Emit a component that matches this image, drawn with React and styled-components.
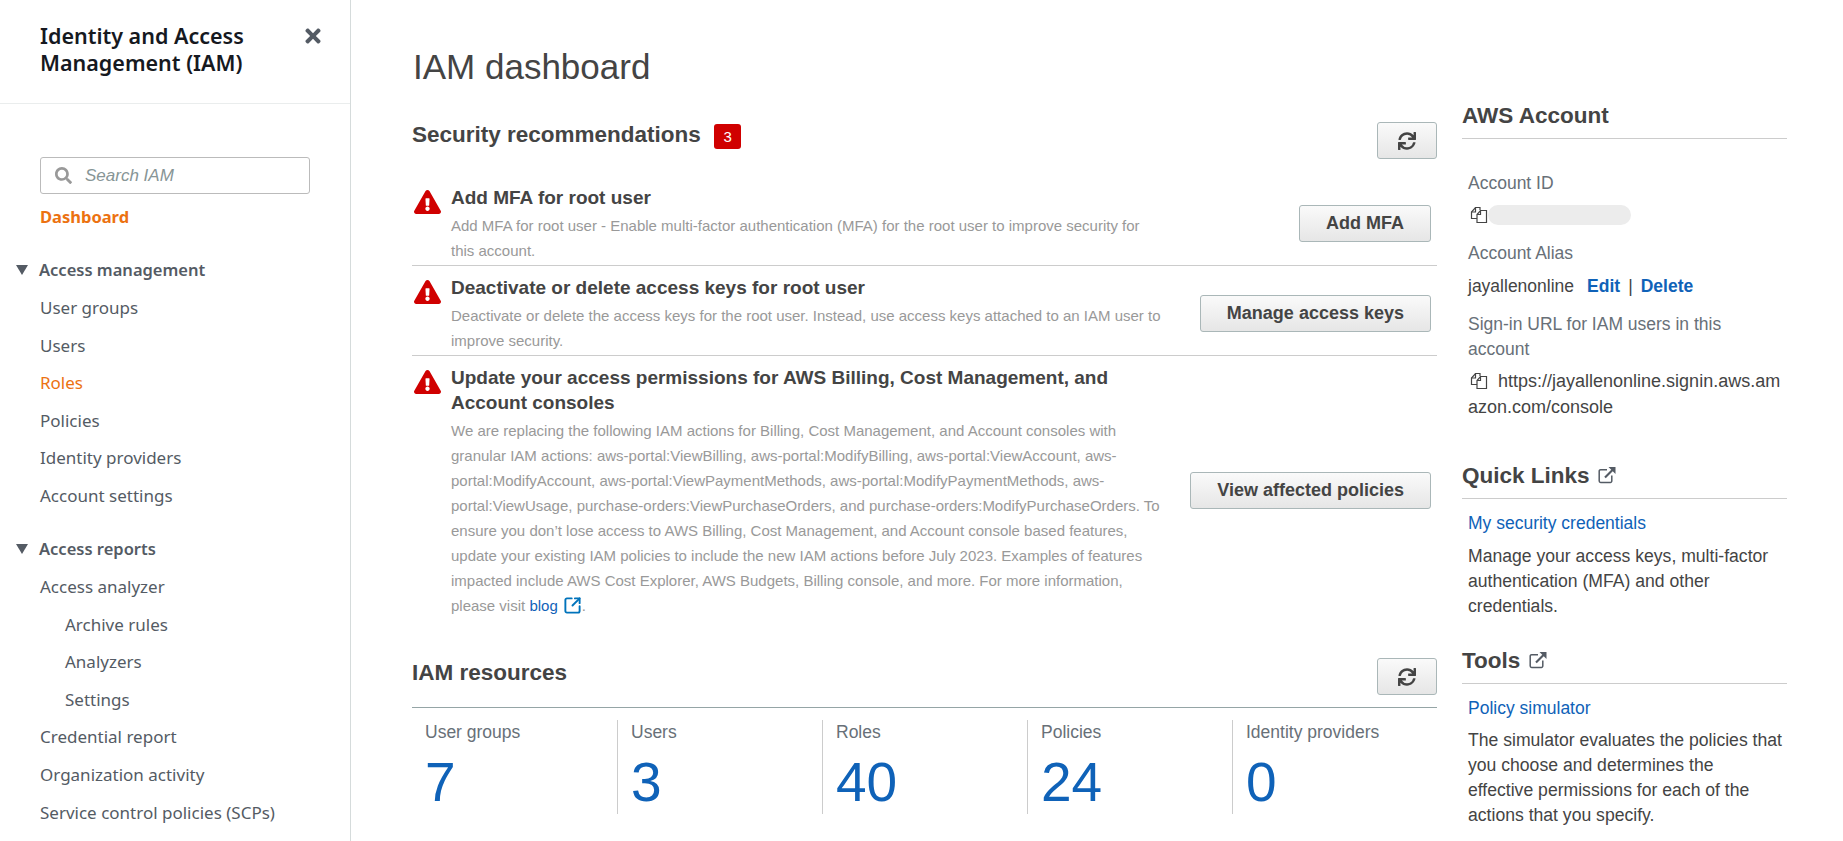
import styled, { createGlobalStyle } from 'styled-components';
import { FaTimes, FaSearch, FaSync, FaExclamationTriangle } from 'react-icons/fa';
import { SquareArrowOutUpRight } from 'lucide-react';

const color = {
  text: '#444',
  muted: '#999',
  label: '#687078',
  link: '#0f62b8',
  orange: '#ec7211',
  red: '#d00000',
  line: '#ccc',
};

const GlobalStyle = createGlobalStyle`
  html, body { margin: 0; padding: 0; height: 100%; background: #fff; }
  body { font-family: "Liberation Sans", Arial, sans-serif; color: ${color.text}; }
`;

const recommendations = [
  {
    title: 'Add MFA for root user',
    text: 'Add MFA for root user - Enable multi-factor authentication (MFA) for the root user to improve security for this account.',
    action: 'Add MFA',
  },
  {
    title: 'Deactivate or delete access keys for root user',
    text: 'Deactivate or delete the access keys for the root user. Instead, use access keys attached to an IAM user to improve security.',
    action: 'Manage access keys',
  },
  {
    title: 'Update your access permissions for AWS Billing, Cost Management, and Account consoles',
    text: 'We are replacing the following IAM actions for Billing, Cost Management, and Account consoles with granular IAM actions: aws-portal:ViewBilling, aws-portal:ModifyBilling, aws-portal:ViewAccount, aws-portal:ModifyAccount, aws-portal:ViewPaymentMethods, aws-portal:ModifyPaymentMethods, aws-portal:ViewUsage, purchase-orders:ViewPurchaseOrders, and purchase-orders:ModifyPurchaseOrders. To ensure you don’t lose access to AWS Billing, Cost Management, and Account console based features, update your existing IAM policies to include the new IAM actions before July 2023. Examples of features impacted include AWS Cost Explorer, AWS Budgets, Billing console, and more. For more information, please visit ',
    action: 'View affected policies',
    blog: true,
  },
];

const resources = [
  ['User groups', 7],
  ['Users', 3],
  ['Roles', 40],
  ['Policies', 24],
  ['Identity providers', 0],
];

function CopyIcon() {
  return (
    <CopySvg viewBox="0 0 18 18" fill="none" stroke="#444" strokeWidth="1.2">
      <path d="M7 12.5H1.5V6L5.5 1.5H10V4" />
      <path d="M5.5 1.5V6H1.5" />
      <path d="M7 16.5V8.5L10.5 4.5H16.5V16.5Z" fill="#fff" />
      <path d="M10.5 4.5V8.5H7" />
    </CopySvg>
  );
}

function ExternalIcon() {
  return (
    <ExternalSvg viewBox="0 0 18 18" fill="none" stroke="#545b64">
      <path d="M9 3.7H2.6A1.4 1.4 0 0 0 1.2 5.1V15A1.4 1.4 0 0 0 2.6 16.4H12.4A1.4 1.4 0 0 0 13.8 15V9.5" strokeWidth="1.5" />
      <path d="M7 11.5L15 3.5" strokeWidth="2.2" />
      <path d="M10.5 1H17.5V8Z" fill="#545b64" stroke="none" />
    </ExternalSvg>
  );
}

function App() {
  return (
    <Page>
      <GlobalStyle />
      <Sidebar>
        <SideHeader>
          <SideTitle>Identity and Access Management (IAM)</SideTitle>
          <CloseIcon />
        </SideHeader>
        <SideBody>
          <SearchBox>
            <FaSearch />
            <span>Search IAM</span>
          </SearchBox>
          <DashLink>Dashboard</DashLink>
          <Group>
            <Caret viewBox="0 0 12 10"><path d="M0 0H12L6 10Z" /></Caret>
            Access management
          </Group>
          <NavItem>User groups</NavItem>
          <NavItem>Users</NavItem>
          <NavItem $active>Roles</NavItem>
          <NavItem>Policies</NavItem>
          <NavItem>Identity providers</NavItem>
          <NavItem>Account settings</NavItem>
          <Group $second>
            <Caret viewBox="0 0 12 10"><path d="M0 0H12L6 10Z" /></Caret>
            Access reports
          </Group>
          <NavItem>Access analyzer</NavItem>
          <NavItem $sub>Archive rules</NavItem>
          <NavItem $sub>Analyzers</NavItem>
          <NavItem $sub>Settings</NavItem>
          <NavItem>Credential report</NavItem>
          <NavItem>Organization activity</NavItem>
          <NavItem>Service control policies (SCPs)</NavItem>
        </SideBody>
      </Sidebar>

      <Main>
        <PageTitle>IAM dashboard</PageTitle>
        <SectionHead>
          <SectionTitle>
            Security recommendations <Badge>3</Badge>
          </SectionTitle>
          <RefreshButton $top="2px"><FaSync /></RefreshButton>
        </SectionHead>
        <Recommendations>
          {recommendations.map((r) => (
            <Rec key={r.title}>
              <WarnIcon />
              <RecBody>
                <RecTitle>{r.title}</RecTitle>
                <RecText>
                  {r.text}
                  {r.blog && (
                    <>
                      <BlogLink>blog</BlogLink>
                      <BlogIcon size={19} strokeWidth={2.4} />.
                    </>
                  )}
                </RecText>
              </RecBody>
              <RecAction>
                <ActionButton>{r.action}</ActionButton>
              </RecAction>
            </Rec>
          ))}
        </Recommendations>

        <ResourcesHead>
          <SectionTitle>IAM resources</SectionTitle>
          <RefreshButton><FaSync /></RefreshButton>
        </ResourcesHead>
        <Stats>
          {resources.map(([label, value]) => (
            <Stat key={label}>
              <StatLabel>{label}</StatLabel>
              <StatValue>{value}</StatValue>
            </Stat>
          ))}
        </Stats>
      </Main>

      <Aside>
        <AsideHead>AWS Account</AsideHead>
        <AccountInfo>
          <InfoLabel>Account ID</InfoLabel>
          <IdRow>
            <CopyIcon />
            <Redacted />
          </IdRow>
          <InfoLabel>Account Alias</InfoLabel>
          <InfoValue>
            jayallenonline
            <StrongLink $first>Edit</StrongLink>
            <Sep>|</Sep>
            <StrongLink>Delete</StrongLink>
          </InfoValue>
          <InfoLabel>Sign-in URL for IAM users in this account</InfoLabel>
          <UrlValue>
            <CopyIcon />
            https://jayallenonline.signin.aws.amazon.com/console
          </UrlValue>
        </AccountInfo>

        <AsideHead $top="41px">
          Quick Links <ExternalIcon />
        </AsideHead>
        <LinkBlock>
          <TextLink>My security credentials</TextLink>
          <LinkText $gap="8px">Manage your access keys, multi-factor authentication (MFA) and other credentials.</LinkText>
        </LinkBlock>

        <AsideHead $top="27px">
          Tools <ExternalIcon />
        </AsideHead>
        <LinkBlock>
          <TextLink>Policy simulator</TextLink>
          <LinkText $gap="7px">The simulator evaluates the policies that you choose and determines the effective permissions for each of the actions that you specify.</LinkText>
        </LinkBlock>
      </Aside>
    </Page>
  );
}
export default App;

const Page = styled.div`
  display: flex;
  height: 100vh;
  overflow: hidden;
`;

const Sidebar = styled.nav`
  flex: 0 0 350px;
  border-right: 1px solid #d5dbdb;
  font-family: "Noto Sans", "Open Sans", sans-serif;
`;

const SideHeader = styled.div`
  display: flex;
  justify-content: space-between;
  height: 104px;
  box-sizing: border-box;
  padding: 22px 26px 0 40px;
  border-bottom: 1px solid #eaeded;
`;

const SideTitle = styled.div`
  width: 245px;
  font-size: 21.5px;
  line-height: 27px;
  font-weight: 600;
  color: #16191f;
`;

const CloseIcon = styled(FaTimes)`
  margin-top: 3px;
  font-size: 22px;
  color: #545b64;
`;

const SideBody = styled.div`
  padding: 53px 0 0 40px;
`;

const SearchBox = styled.div`
  display: flex;
  align-items: center;
  gap: 13px;
  width: 270px;
  height: 37px;
  box-sizing: border-box;
  padding-left: 14px;
  border: 1px solid #bbb;
  border-radius: 3px;
  font-family: "Liberation Sans", sans-serif;
  font-size: 17px;
  font-style: italic;
  color: #879596;
  svg { font-size: 17px; color: #999; }
`;

const DashLink = styled.div`
  margin-top: 7px;
  font-size: 16.5px;
  line-height: 32px;
  font-weight: 700;
  color: ${color.orange};
`;

const Group = styled.div`
  display: flex;
  align-items: center;
  margin: ${(p) => (p.$second ? '18.5px' : '21px')} 0 3px -24px;
  font-size: 16.5px;
  line-height: 32px;
  font-weight: 600;
  color: #545b64;
`;

const Caret = styled.svg`
  width: 12px;
  height: 10px;
  margin-right: 11px;
  fill: #545b64;
`;

const NavItem = styled.div`
  height: 37.6px;
  line-height: 37.6px;
  padding-left: ${(p) => (p.$sub ? '25px' : '0')};
  font-size: 17px;
  color: ${(p) => (p.$active ? color.orange : '#545b64')};
`;

const Main = styled.main`
  flex: 0 0 1086px;
  padding-left: 61px;
  box-sizing: border-box;
`;

const PageTitle = styled.h1`
  margin: 0 0 0 1px;
  padding-top: 46px;
  font-size: 35px;
  line-height: 42px;
  font-weight: 400;
  color: #444;
`;

const SectionHead = styled.div`
  display: flex;
  justify-content: space-between;
  margin-top: 32px;
`;

const ResourcesHead = styled(SectionHead)`
  margin-top: 38px;
  padding-bottom: 12px;
  border-bottom: 1px solid #95a5a6;
`;

const SectionTitle = styled.h2`
  margin: 1px 0 0;
  font-size: 22.5px;
  line-height: 28px;
  font-weight: 700;
  color: #444;
`;

const Badge = styled.span`
  display: inline-block;
  width: 27px;
  height: 25px;
  margin-left: 7px;
  border-radius: 3px;
  background: ${color.red};
  color: #fff;
  font-size: 15px;
  font-weight: 400;
  line-height: 25px;
  text-align: center;
`;

const buttonFace = `
  border: 1px solid #aab7b8;
  border-radius: 3px;
  background: linear-gradient(#fafafa, #e6e6e6);
  color: #444;
  box-sizing: border-box;
  font-family: "Liberation Sans", sans-serif;
`;

const RefreshButton = styled.button`
  ${buttonFace}
  display: flex;
  align-items: center;
  justify-content: center;
  width: 60px;
  height: 37px;
  margin-top: ${(p) => p.$top || '0'};
  font-size: 18px;
  padding: 0;
`;

const Recommendations = styled.div`
  margin-top: 17px;
`;

const Rec = styled.div`
  display: flex;
  align-items: stretch;
  padding: 9px 0 2px;
  border-bottom: 1px solid ${color.line};
  &:last-child { border-bottom: 0; }
`;

const WarnIcon = styled(FaExclamationTriangle)`
  flex: none;
  width: 27px;
  height: 24px;
  margin: 5px 10px 0 2px;
  color: ${color.red};
`;

const RecBody = styled.div`
  width: 715px;
`;

const RecTitle = styled.div`
  margin-bottom: 3px;
  font-size: 19px;
  line-height: 25px;
  font-weight: 700;
  color: #444;
`;

const RecText = styled.div`
  font-size: 15px;
  line-height: 25px;
  color: ${color.muted};
`;

const BlogLink = styled.span`
  color: ${color.link};
`;

const BlogIcon = styled(SquareArrowOutUpRight)`
  margin-left: 5px;
  vertical-align: -4px;
  color: #0073bb;
`;

const RecAction = styled.div`
  flex: 1;
  display: flex;
  align-items: center;
  justify-content: flex-end;
  padding: 0 6px 2px 0;
`;

const ActionButton = styled.button`
  ${buttonFace}
  height: 37px;
  padding: 0 26px;
  font-size: 18px;
  font-weight: 700;
`;

const Stats = styled.div`
  display: grid;
  grid-template-columns: repeat(5, 205px);
  margin-top: 12px;
`;

const Stat = styled.div`
  height: 94px;
  padding-left: 13px;
  box-sizing: border-box;
  border-left: 1px solid ${color.line};
  &:first-child { border-left: 0; }
`;

const StatLabel = styled.div`
  font-size: 17.5px;
  line-height: 24px;
  color: ${color.label};
`;

const StatValue = styled.div`
  margin-top: 7px;
  font-size: 55px;
  line-height: 62px;
  color: ${color.link};
`;

const Aside = styled.aside`
  flex: 0 0 325px;
  margin-left: 25px;
  padding-top: 101px;
`;

const AsideHead = styled.h3`
  margin: ${(p) => p.$top || '0'} 0 0;
  padding-bottom: 7px;
  border-bottom: 1px solid ${color.line};
  font-size: 22.5px;
  line-height: 30px;
  font-weight: 700;
  color: #444;
`;

const ExternalSvg = styled.svg`
  width: 18px;
  height: 18px;
  margin-left: 2px;
  vertical-align: -1px;
`;

const AccountInfo = styled.div`
  padding: 32px 0 0 6px;
`;

const InfoLabel = styled.div`
  max-width: 290px;
  font-size: 17.5px;
  line-height: 25px;
  color: ${color.label};
`;

const InfoValue = styled.div`
  margin: 7px 0 13px;
  font-size: 17.5px;
  line-height: 26px;
  color: #444;
`;

const IdRow = styled.div`
  display: flex;
  align-items: center;
  height: 25px;
  margin: 6px 0 14px 2px;
`;

const CopySvg = styled.svg`
  flex: none;
  width: 18px;
  height: 18px;
`;

const Redacted = styled.div`
  width: 143px;
  height: 20px;
  border-radius: 10px;
  background: #ececec;
`;

const StrongLink = styled.span`
  margin-left: ${(p) => (p.$first ? '13px' : '0')};
  font-weight: 700;
  color: ${color.link};
`;

const Sep = styled.span`
  margin: 0 8px;
`;

const UrlValue = styled.div`
  width: 316px;
  margin-top: 6px;
  font-size: 18px;
  line-height: 26px;
  color: #444;
  word-break: break-all;
  svg { margin: 0 10px 0 2px; vertical-align: -3px; }
`;

const LinkBlock = styled.div`
  padding: 12px 4.5px 0 6px;
`;

const TextLink = styled.div`
  font-size: 17.5px;
  line-height: 25px;
  color: ${color.link};
`;

const LinkText = styled.p`
  margin: ${(p) => p.$gap} 0 0;
  font-size: 17.6px;
  line-height: 25px;
  color: #444;
`;
